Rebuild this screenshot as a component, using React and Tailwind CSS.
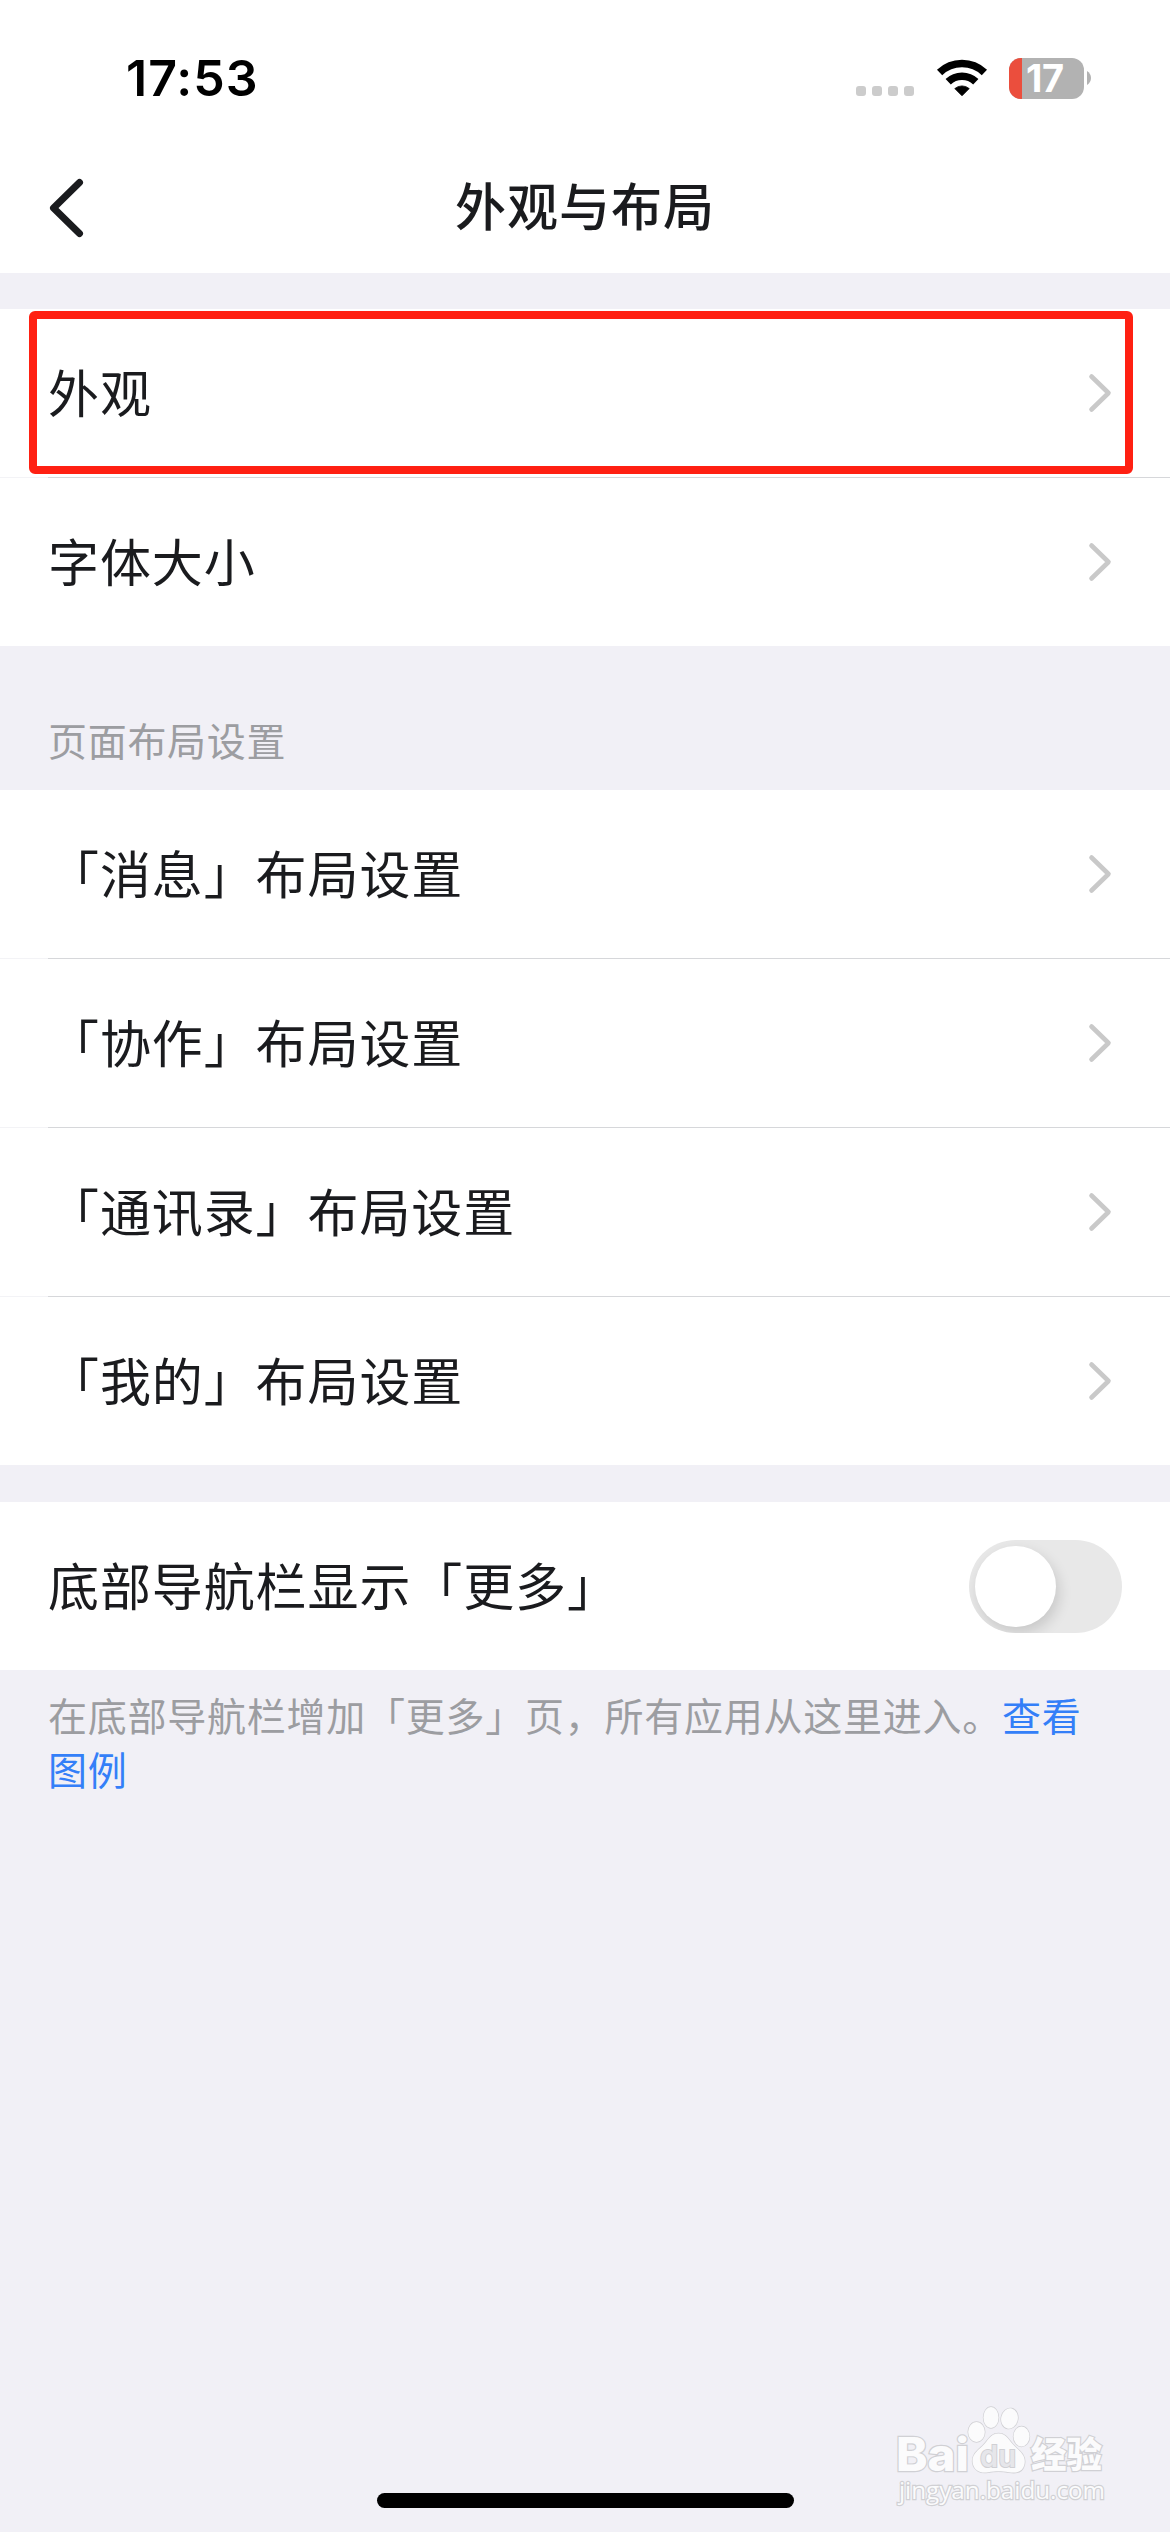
import { useState } from 'react';

const appearanceItems = ['外观', '字体大小'];

const layoutItems = [
  '「消息」布局设置',
  '「协作」布局设置',
  '「通讯录」布局设置',
  '「我的」布局设置',
];

const WifiIcon = () => (
  <svg width="52" height="38" viewBox="0 0 52 38" fill="none">
    <path d="M3.6 13.4A32.5 32.5 0 0 1 48.4 13.4" stroke="#000" strokeWidth="7.6" />
    <path d="M12.2 22.7A20 20 0 0 1 39.8 22.7" stroke="#000" strokeWidth="7.6" />
    <path d="M18.8 29.6A11 11 0 0 1 33.2 29.6L26 36.8Z" fill="#000" stroke="#000" strokeWidth="0.8" strokeLinejoin="round" />
  </svg>
);

const Battery = () => (
  <div className="flex items-center gap-[3px]">
    <div className="flex h-[41px] w-[75px] items-center rounded-[12px] bg-[#b2b2b2]">
      <div className="h-full w-[13px] rounded-l-[12px] bg-[#eb4e3d]" />
      <span className="ml-[4px] text-[38px] leading-[41px] font-bold tracking-[-0.5px] text-white">17</span>
    </div>
    <svg width="4" height="14" viewBox="0 0 4 14">
      <path d="M0 0C2.4 1.4 4 4 4 7S2.4 12.6 0 14Z" fill="#b2b2b2" />
    </svg>
  </div>
);

const StatusBar = () => (
  <div className="flex h-[156px] items-center justify-between pr-[79px] pl-[126px] font-['Inter',sans-serif]">
    <span className="text-[50px] leading-[60px] font-semibold tracking-[1px] text-black">17:53</span>
    <div className="flex items-center">
      <div className="mt-[26px] mr-[22px] flex gap-[6px]">
        {[0, 1, 2, 3].map((dot) => (
          <span key={dot} className="size-[10px] rounded-[3px] bg-[#cccccc]" />
        ))}
      </div>
      <div className="mr-[21px]">
        <WifiIcon />
      </div>
      <Battery />
    </div>
  </div>
);

const NavBar = () => (
  <div className="grid h-[117px] grid-cols-[1fr_auto_1fr] items-center px-[48px]">
    <svg width="38" height="60" viewBox="0 0 38 60" fill="none" className="mb-[14px]">
      <path d="M31.5 4.5L5.5 30L31.5 55.5" stroke="#1a1b1e" strokeWidth="7" strokeLinecap="round" strokeLinejoin="round" />
    </svg>
    <h1 className="mb-[22px] text-[51px] leading-[60px] font-medium tracking-[1px]">外观与布局</h1>
  </div>
);

const Chevron = () => (
  <svg width="24" height="40" viewBox="0 0 24 40" fill="none" className="mr-[10px]">
    <path d="M3.5 3.5L20.5 20L3.5 36.5" stroke="#c9c9c9" strokeWidth="4.6" strokeLinecap="round" strokeLinejoin="round" />
  </svg>
);

const Row = ({ children, control }) => (
  <div className="flex h-[168px] items-center justify-between bg-white px-[48px]">
    <span className="mb-[4px] text-[51px] leading-[60px] tracking-[0.9px]">{children}</span>
    {control || <Chevron />}
  </div>
);

const Divider = () => (
  <div className="flex h-px bg-[#d6d7da]">
    <div className="w-[48px] bg-[#f3f3f6]" />
  </div>
);

const RowList = ({ items }) => (
  <div>
    {items.map((item, index) => (
      <div key={item}>
        {index > 0 && <Divider />}
        <Row>{item}</Row>
      </div>
    ))}
  </div>
);

const Toggle = ({ checked, onChange }) => (
  <button
    type="button"
    role="switch"
    aria-checked={checked}
    onClick={() => onChange(!checked)}
    className={`flex h-[93px] w-[153px] items-center overflow-hidden rounded-full px-[6px] ${
      checked ? 'justify-end bg-[#347ff8]' : 'justify-start bg-[#e8e8e8]'
    }`}
  >
    <span className="size-[81px] rounded-full bg-white shadow-[3px_6px_14px_rgba(0,0,0,0.14)]" />
  </button>
);

const Watermark = () => (
  <svg
    width="230"
    height="110"
    viewBox="0 0 230 110"
    className="absolute right-[50px] bottom-[22px]"
    fill="#fbfbfc"
    stroke="#d0d0d4"
    strokeWidth="1.4"
    paintOrder="stroke"
  >
    <text x="6" y="71" fontSize="46" fontWeight="800" fontFamily="Inter, sans-serif" strokeWidth="2.4" textLength="73" lengthAdjust="spacingAndGlyphs">Bai</text>
    <ellipse cx="86.5" cy="32" rx="8.3" ry="10" />
    <ellipse cx="101" cy="17.5" rx="7.5" ry="10.5" />
    <ellipse cx="119.5" cy="18.5" rx="8.3" ry="10.2" transform="rotate(12 119.5 18.5)" />
    <ellipse cx="131.5" cy="36.5" rx="8" ry="10" />
    <path d="M108.5 33.5C117 33.5 119 41 125 46.5C131 52 136 56 134.5 64C133 72 126 73.5 119 72.2C111 70.8 106 70.8 98 72.2C91 73.5 84 71 82.7 63C81.5 55 87 51 92.5 46C98 41 100 33.5 108.5 33.5Z" />
    <text x="90" y="66.5" fontSize="30" fontWeight="600" fontFamily="Inter, sans-serif" fill="#e6e6ea" strokeWidth="2" textLength="36" lengthAdjust="spacingAndGlyphs">du</text>
    <text x="141" y="68" fontSize="36" fontWeight="900" fontFamily="Noto Sans CJK SC, sans-serif" strokeWidth="2.4" textLength="71" lengthAdjust="spacingAndGlyphs">经验</text>
    <text x="9" y="99" fontSize="24" fontFamily="Open Sans, sans-serif" strokeWidth="2.4" textLength="206" lengthAdjust="spacingAndGlyphs">jingyan.baidu.com</text>
  </svg>
);

const App = () => {
  const [showMore, setShowMore] = useState(false);

  return (
    <div className="relative flex h-[2532px] w-[1170px] flex-col overflow-hidden bg-[#f1f0f6] font-['Noto_Sans_CJK_SC',sans-serif] text-[#1a1b1e]">
      <header className="bg-white">
        <StatusBar />
        <NavBar />
      </header>

      <main className="flex grow flex-col">
        <section className="relative mt-[36px]">
          <RowList items={appearanceItems} />
          {/* Highlight around the first row */}
          <div className="absolute top-[2px] left-[29px] h-[163px] w-[1104px] rounded-[6px] border-8 border-[#ff2012]" />
        </section>

        <section>
          <h2 className="flex h-[144px] items-end px-[48px] pb-[24px] text-[39px] leading-[54px] font-normal tracking-[0.7px] text-[#9c9da1]">
            页面布局设置
          </h2>
          <RowList items={layoutItems} />
        </section>

        <section className="mt-[37px]">
          <Row control={<Toggle checked={showMore} onChange={setShowMore} />}>底部导航栏显示「更多」</Row>
          <p className="pt-[17px] pr-[60px] pl-[48px] text-[39px] leading-[54px] tracking-[0.75px] text-[#9c9da1]">
            在底部导航栏增加「更多」页，所有应用从这里进入。
            <a className="text-[#347ff8]">查看图例</a>
          </p>
        </section>
      </main>

      <div className="mx-auto mb-[24px] h-[15px] w-[417px] rounded-full bg-black" />
      <Watermark />
    </div>
  );
};

export default App;
